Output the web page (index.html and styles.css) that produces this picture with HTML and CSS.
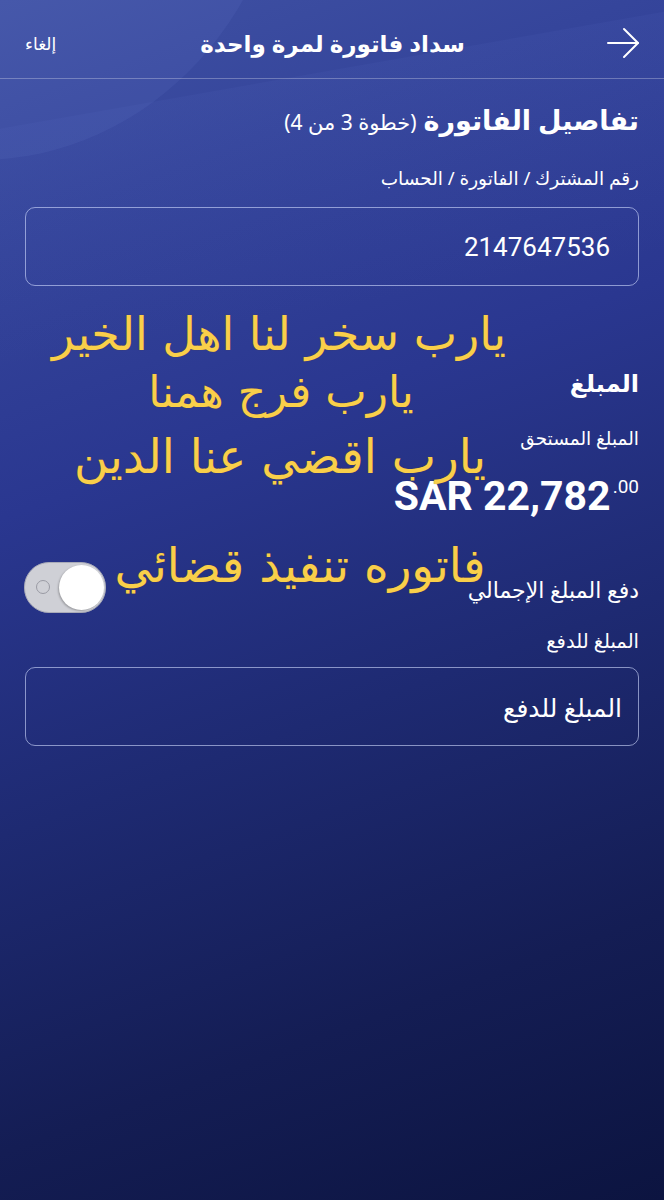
FILE: index.html
```html
<!DOCTYPE html>
<html lang="ar" dir="rtl">
<head>
<meta charset="utf-8">
<title>سداد فاتورة لمرة واحدة</title>
<link rel="stylesheet" href="styles.css">
</head>
<body>
<div class="screen">
  <div class="bg-shape shape-a"></div>
  <div class="bg-shape shape-b"></div>
  <header class="topbar">
    <span class="back">
      <svg width="34" height="32" viewBox="0 0 34 32" fill="none" stroke="#fff" stroke-width="2" stroke-linecap="round" stroke-linejoin="round">
        <path d="M2 16 H32"/>
        <path d="M18 2 L32 16 L18 30"/>
      </svg>
    </span>
    <h1 class="title">سداد فاتورة لمرة واحدة</h1>
    <span class="cancel">إلغاء</span>
  </header>

  <main class="content">
    <h2 class="section-title">تفاصيل الفاتورة <span class="step">(خطوة 3 من 4)</span></h2>
    <div class="label first">رقم المشترك / الفاتورة / الحساب</div>
    <div class="field"><span class="field-value">2147647536</span></div>

    <h3 class="amount-title">المبلغ</h3>
    <div class="label small">المبلغ المستحق</div>
    <div class="amount"><span class="big">SAR 22,782</span><sup>.00</sup></div>

    <div class="toggle-row">
      <span class="toggle-label">دفع المبلغ الإجمالي</span>
      <span class="toggle"><span class="toggle-ring"></span><span class="knob"></span></span>
    </div>

    <div class="label pay">المبلغ للدفع</div>
    <div class="field pay-field"><span class="field-placeholder">المبلغ للدفع</span></div>
  </main>

  <div class="overlay">
    <div class="dua l1">يارب سخر لنا اهل الخير</div>
    <div class="dua l2">يارب فرج همنا</div>
    <div class="dua l3">يارب اقضي عنا الدين</div>
    <div class="dua l4">فاتوره تنفيذ قضائي</div>
  </div>
</div>
</body>
</html>
```

FILE: styles.css
```css
html, body {
  margin: 0;
  padding: 0;
}
body {
  width: 664px;
  height: 1200px;
  overflow: hidden;
  font-family: "Noto Sans", "DejaVu Sans", sans-serif;
  color: #fff;
}
.screen {
  position: relative;
  width: 664px;
  height: 1200px;
  overflow: hidden;
  background: linear-gradient(160deg, #4052a4 0%, #35459b 16%, #2a3790 36%, #1e2a72 58%, #141d54 80%, #0c1440 100%);
}
.bg-shape {
  position: absolute;
  pointer-events: none;
}
.shape-a {
  left: -330px;
  top: -520px;
  width: 620px;
  height: 680px;
  border-radius: 50%;
  background: rgba(120, 140, 215, 0.11);
}
.shape-b {
  left: -120px;
  top: 150px;
  width: 900px;
  height: 240px;
  transform: rotate(-10deg);
  transform-origin: left top;
  background: linear-gradient(180deg, rgba(100, 120, 210, 0.08), rgba(100, 120, 210, 0));
}
.topbar {
  position: relative;
  height: 79px;
  box-sizing: border-box;
  display: flex;
  align-items: center;
  padding: 8px 24px 0 25px;
  border-bottom: 1px solid rgba(255, 255, 255, 0.28);
}
.back {
  width: 60px;
  display: flex;
  align-items: center;
}
.title {
  flex: 1;
  margin: 0;
  text-align: center;
  font-size: 23px;
  font-weight: 700;
}
.cancel {
  font-size: 17px;
  width: 60px;
  text-align: left;
}
.content {
  position: relative;
  padding: 0 25px;
}
.section-title {
  margin: 23px 0 0;
  font-size: 27px;
  line-height: 36px;
  font-weight: 700;
}
.step {
  font-size: 21px;
  font-weight: 400;
}
.label {
  font-size: 18.5px;
  line-height: 26px;
}
.label.first {
  margin-top: 25px;
}
.field {
  margin-top: 16px;
  height: 77px;
  border: 1px solid rgba(210, 220, 255, 0.6);
  border-radius: 10px;
  display: flex;
  align-items: center;
  padding: 0 28px;
}
.field-value {
  font-family: Roboto, "Noto Sans", sans-serif;
  font-size: 26px;
  direction: ltr;
}
.pay-field {
  margin-top: 13px;
  padding: 0 16px;
}
.field-placeholder {
  font-size: 25px;
}
.amount-title {
  margin: 81px 0 0;
  font-size: 24px;
  line-height: 32px;
  font-weight: 700;
}
.label.small {
  margin-top: 26px;
  font-size: 18.5px;
}
.amount {
  margin-top: 12px;
  direction: ltr;
  text-align: right;
  font-family: Roboto, "Noto Sans", sans-serif;
  font-weight: 700;
  line-height: 48px;
  height: 48px;
}
.amount .big {
  font-size: 41px;
}
.amount sup {
  font-size: 19px;
  font-weight: 400;
  vertical-align: 17px;
  margin-left: 2px;
}
.toggle-row {
  margin-top: 51px;
  display: flex;
  align-items: center;
  justify-content: space-between;
  height: 51px;
}
.toggle-label {
  font-size: 22px;
  padding-top: 3px;
}
.toggle {
  position: relative;
  width: 80px;
  height: 49px;
  border-radius: 25px;
  background: #cfd0d6;
  border: 1px solid #a9abb8;
  margin-left: -1px;
  direction: ltr;
}
.toggle-ring {
  position: absolute;
  left: 11px;
  top: 17px;
  width: 12px;
  height: 12px;
  border: 1.5px solid #9a9ba4;
  border-radius: 50%;
}
.knob {
  position: absolute;
  right: 1px;
  top: 2px;
  width: 45px;
  height: 45px;
  border-radius: 50%;
  background: #fff;
  box-shadow: -1px 1px 2px rgba(0, 0, 0, 0.25);
}
.label.pay {
  margin-top: 15px;
  font-size: 19.5px;
}
.overlay {
  position: absolute;
  left: 0;
  top: 0;
  width: 664px;
  height: 1200px;
  pointer-events: none;
}
.dua {
  position: absolute;
  width: 500px;
  color: #f9cf4a;
  font-family: "DejaVu Sans", sans-serif;
  line-height: 56px;
  white-space: nowrap;
  text-align: center;
  text-shadow: 0 0 1px rgba(120, 80, 0, 0.6);
}
.l1 { left: 29px; top: 306px; font-size: 46px; }
.l2 { left: 31px; top: 364px; font-size: 44px; }
.l3 { left: 30px; top: 429px; font-size: 47px; }
.l4 { left: 50px; top: 538px; font-size: 47px; }
```
